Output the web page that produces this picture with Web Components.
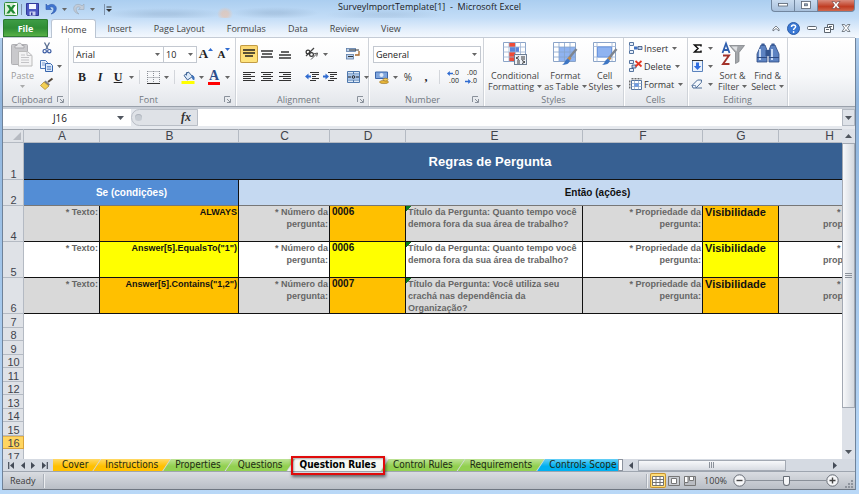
<!DOCTYPE html>
<html lang="pt">
<head>
    <meta charset="UTF-8">
    <meta name="viewport" content="width=device-width, initial-scale=1.0">
    <title>SurveyImportTemplate[1] - Microsoft Excel</title>
    <style>
        html, body {
            height: 100%;
            margin: 0;
        }
        body {
            font-family: "Open Sans", "Noto Sans", sans-serif;
            font-size: 9px;
            color: #444;
            --line: #b4bac3;
        }
    </style>
</head>
<body>
    <excel-window></excel-window>

    <script>
        // every drawing used on the ribbon and the bars: [width, height, markup]
        const ICONS = {
            excel: [14, 14, '<rect x=".5" y=".5" width="13" height="13" rx="1" fill="#fff" stroke="#2f8a3c"/><path d="M1 1h9v12H1z" fill="#d9efd7"/><path d="M2.5 3h3l1.6 2.6L9 3h2.8L8.5 7.2l3.3 4.2H9L6.9 8.9l-1.8 2.5H2.3L5.5 7.2z" fill="#1f8a34"/>'],
            save: [13, 13, '<path d="M.5.5h12v12h-11l-1-1z" fill="#4b57c0" stroke="#30389a"/><path d="M3 1h7v5H3z" fill="#f4f7ff"/><path d="M3.5 8.5h6v4h-6z" fill="#c9cff0"/><path d="M5 9.5h1.5V12H5z" fill="#30389a"/>'],
            undo: [12, 12, '<path d="M1 1v5.5h5.5L4.7 4.7C6.5 3 9 4 8.8 6.5 8.7 8.5 7.5 9.8 6 11c3.5-.8 5.5-3 5.3-5.8C11 1.5 6.5 0 2.9 2.9z" fill="#3f74d0" stroke="#2b56a8" stroke-width=".6"/>'],
            redo: [12, 12, '<path d="M11 1v5.5H5.5L7.3 4.7C5.5 3 3 4 3.2 6.5 3.3 8.5 4.5 9.8 6 11 2.5 10.2.5 8 .7 5.2 1 1.5 5.5 0 9.1 2.9z" fill="#c3ccd8" stroke="#9ba7b6" stroke-width=".6"/>'],
            custom: [8, 7, '<path d="M1.5 1h5" stroke="#333" stroke-width="1"/><path d="M1 3h6L4 6z" fill="#333"/>'],
            arrow: [5, 3, '<path d="M0 0h5L2.5 3z" fill="#666"/>'],
            bluetop: [5, 3, '<path d="M0 3h5L2.5 0z" fill="#2f6bd0"/>'],
            bluedown: [5, 3, '<path d="M0 0h5L2.5 3z" fill="#2f6bd0"/>'],
            wmin: [10, 4, '<rect x=".5" y=".5" width="9" height="2.5" fill="#fff" stroke="#555f6e" stroke-width=".8"/>'],
            wmax: [10, 8, '<rect x=".5" y=".5" width="9" height="7" fill="#fff" stroke="#555f6e" stroke-width=".8"/><rect x="3.5" y="2.8" width="3" height="2" fill="#8fa5bd" stroke="#555f6e" stroke-width=".7"/>'],
            wclose: [10, 8, '<path d="M1 .5h2.5L5 2.5 6.5.5H9L6.5 4 9 7.5H6.5L5 5.5 3.5 7.5H1L3.5 4z" fill="#fff" stroke="#6b3a3a" stroke-width=".6"/>'],
            collapse: [8, 7, '<path d="M1 4l3-3 3 3v2L4 3.5 1 6z" fill="#fff" stroke="#5d6670" stroke-width=".8"/>'],
            help: [13, 13, '<circle cx="6.5" cy="6.5" r="6" fill="#3a78d4" stroke="#2b5ca8"/><path d="M4.5 5c0-2.8 4.2-2.7 4.1-.2C8.5 6.3 6.6 6.3 6.6 8" fill="none" stroke="#fff" stroke-width="1.5"/><circle cx="6.6" cy="10" r=".9" fill="#fff"/>'],
            dmin: [10, 5, '<rect x=".5" y=".5" width="9" height="3" rx="1" fill="#fff" stroke="#5d6670"/>'],
            drest: [10, 9, '<path d="M3.5.5h6v5h-6z" fill="#fff" stroke="#5d6670"/><path d="M.5 3.5h6v5h-6z" fill="#fff" stroke="#5d6670"/><path d="M2 5.5h3M5 2.5h3" stroke="#5d6670"/>'],
            dclose: [10, 8, '<path d="M1 .5h2.5L5 2.5 6.5.5H9L6.5 4 9 7.5H6.5L5 5.5 3.5 7.5H1L3.5 4z" fill="#fff" stroke="#5d6670" stroke-width=".8"/>'],
            paste: [22, 25, '<rect x=".5" y="2.5" width="16" height="20" rx="1" fill="#c9c9cc" stroke="#b0b0b4"/><path d="M4 3.5h2C6 .5 11 .5 11 3.5h2V6H4z" fill="#e8e8ea" stroke="#a9a9ad"/><path d="M7.5 9.5h9l4.5 4V24H7.5z" fill="#f3f3f4" stroke="#bbb"/><path d="M16 9.5v4h5M10 13h4M10 15.5h8M10 18h8M10 20.5h8" fill="none" stroke="#c3c3c6"/>'],
            cut: [10, 12, '<path d="M2.5.5L6 7M7.5.5L4 7" stroke="#5a6f92" stroke-width="1.3"/><circle cx="2.7" cy="9.2" r="1.7" fill="none" stroke="#3557a0" stroke-width="1.2"/><circle cx="7.3" cy="9.2" r="1.7" fill="none" stroke="#3557a0" stroke-width="1.2"/>'],
            copy: [13, 12, '<path d="M.5.5h5l2 2v6h-7z" fill="#eaf2fd" stroke="#4a76b8"/><path d="M5.5 3.5h5l2 2v6h-7z" fill="#dbe9fb" stroke="#3765ad"/><path d="M2 3h3M2 5h3M7 6.5h4M7 8h4M7 9.5h4" stroke="#4a76b8" stroke-width=".7"/>'],
            brush: [14, 12, '<path d="M12.5.5L8 4" stroke="#55493c" stroke-width="2"/><path d="M5.5 2.5l4.5 4-1.5 1.5L4 4z" fill="#7d7f88"/><path d="M4 4L.5 7.5 5 11.5 9 8z" fill="#f2cf55" stroke="#a98426" stroke-width=".7"/>'],
            border: [13, 13, '<path d="M.5.5h12M.5 6.5h12M.5 0v12M6.5 0v12M12.5 0v12" stroke="#8b8f96" stroke-dasharray="1 1"/><path d="M0 12.5h13" stroke="#333"/>'],
            fill: [14, 13, '<path d="M3 4.5L7.5 1l4 4.5-5 3.5z" fill="#dce9f8" stroke="#3f6495"/><path d="M5.5 4.5v-3h2" fill="none" stroke="#3f6495"/><path d="M11 4.5c2 .5 2.5 2 1.8 4.5-1-.8-1.8-2-1.8-4.5z" fill="#3b6fb8" stroke="#3b6fb8"/><path d="M.5 10h13v3H.5z" fill="#ff0"/>'],
            ink: [14, 3, '<path d="M1 0h12v3H1z" fill="#f00"/>'],
            atop: [12, 10, '<path d="M0 1h12M0 4h12M2 7h8" stroke="#222" stroke-width="1.5"/>'],
            amid: [12, 10, '<path d="M0 2h12M1 5h10M0 8h12" stroke="#333" stroke-width="1.5"/>'],
            abot: [12, 10, '<path d="M2 3h8M0 6h12M0 9h12" stroke="#333" stroke-width="1.5"/>'],
            left: [12, 10, '<path d="M0 .5h12M0 2.5h8M0 4.5h12M0 6.5h8M0 8.5h12" stroke="#333"/>'],
            center: [12, 10, '<path d="M0 .5h12M2 2.5h8M0 4.5h12M2 6.5h8M0 8.5h12" stroke="#333"/>'],
            right: [12, 10, '<path d="M0 .5h12M4 2.5h8M0 4.5h12M4 6.5h8M0 8.5h12" stroke="#333"/>'],
            orient: [14, 12, '<path d="M1 8l8-8" stroke="#444" stroke-width="1.2"/><path d="M6 11.5l6-6M12.5 5L9 5.8M12.5 5l-.8 3.500" stroke="#555" fill="none"/><circle cx="3" cy="4" r="1.9" fill="none" stroke="#333" stroke-width="1.2"/><circle cx="6.5" cy="6.5" r="1.9" fill="none" stroke="#333" stroke-width="1.2"/>'],
            outdent: [14, 10, '<path d="M5 .5h9M7 2.5h7M7 4.5h4M7 6.5h7M5 8.5h6" stroke="#333"/><path d="M0 4.5l3.5-3v2H6v2H3.5v2z" fill="#2f6bd0"/>'],
            indent: [14, 10, '<path d="M5 .5h9M7 2.5h7M7 4.5h4M7 6.5h7M5 8.5h6" stroke="#333"/><path d="M6 4.5l-3.5-3v2H0v2h2.5v2z" fill="#2f6bd0"/>'],
            wrap: [14, 12, '<rect x=".5" y=".5" width="9" height="3" fill="#b9cfea" stroke="#5c7da8" stroke-width=".8"/><rect x=".5" y="6.5" width="7" height="4.5" fill="#b9cfea" stroke="#5c7da8" stroke-width=".8"/><path d="M3 2h10M2 8.5h5" stroke="#333"/><path d="M13 3v4H9" fill="none" stroke="#a5672c" stroke-width="1.3"/>'],
            merge: [13, 12, '<path d="M.5.5h12v11H.5z" fill="#dbe8f7" stroke="#4f78ad"/><path d="M.5 3h12M.5 9h12M6.5 0v3M6.5 9v3" stroke="#4f78ad"/><path d="M1 3.5h11v5H1z" fill="#a9c6ec"/><path d="M1 6h3M12 6H9" stroke="#222"/><circle cx="6.5" cy="6" r="1.3" fill="none" stroke="#222"/>'],
            money: [14, 13, '<path d="M.5 1h12v6.5H.5z" fill="#7fa5dd" stroke="#3b66ab"/><circle cx="6.5" cy="4" r="2" fill="#e3edfa"/><ellipse cx="9" cy="11" rx="4.5" ry="1.6" fill="#e8b73a" stroke="#93691a" stroke-width=".6"/><ellipse cx="10.5" cy="8.6" rx="2.5" ry="1.4" fill="#f5cf60" stroke="#93691a" stroke-width=".6"/>'],
            moveleft: [6, 5, '<path d="M0 2.5L2.8 0v1.7H6v1.6H2.8V5z" fill="#2f6bd0"/>'],
            moveright: [6, 5, '<path d="M6 2.5L3.2 0v1.7H0v1.6h3.2V5z" fill="#2f6bd0"/>'],
            conditional: [24, 24, '<path d="M.5.5h22v19H.5z" fill="#fff" stroke="#8ba4c8"/><path d="M6 1h6v4H6zM6 10h6v5H6zM6 15h6v4H6z" fill="#ee4b38"/><path d="M7 5h9v5H7z" fill="#5b86dc"/><path d="M6 .5v19M12.5 0v19M17.5 0v19M0 5h23M0 10h23M0 15h23" stroke="#9db2d3" stroke-width=".8"/><rect x="11.5" y="12.5" width="12" height="10" fill="#eef2f8" stroke="#6f7f94"/><path d="M16 14.5L13 16l3 1.5M18 15h4M18 17h4M14 19h3M14 21h3M19 18.5l3 1.5-3 1.5" fill="none" stroke="#222" stroke-width=".9"/>'],
            table: [24, 24, '<path d="M.5.5h22v19H.5z" fill="#fff" stroke="#8ba4c8"/><path d="M6 5h16v14H6z" fill="#8fb3f0"/><path d="M6 .5v19M11.5 0v19M17 0v19M0 5h23M0 10h23M0 15h23" stroke="#86a3cc" stroke-width=".8"/><path d="M23.5 7L16 16" stroke="#7e858f" stroke-width="2.5"/><path d="M16.5 14.5l2 2-2 2L14 16.500z" fill="#c08a4b"/><path d="M15 16.5l2 2.500c-2 4-5 3.500-8 4 3-1.500 2.500-5 6-6.500z" fill="#3e76c4"/>'],
            cell: [24, 24, '<path d="M.5.5h22v19H.5z" fill="#fff" stroke="#8ba4c8"/><path d="M4 .5v19M19 0v19M0 4.5h23M0 15h23" stroke="#9db2d3" stroke-width=".8"/><path d="M4.5 5h14v10h-14z" fill="#8fb3f0" stroke="#6d97e0"/><path d="M23.5 7L16 16" stroke="#7e858f" stroke-width="2.5"/><path d="M16.5 14.5l2 2-2 2L14 16.500z" fill="#c08a4b"/><path d="M15 16.5l2 2.500c-2 4-5 3.500-8 4 3-1.500 2.500-5 6-6.500z" fill="#3e76c4"/>'],
            insert: [13, 12, '<path d="M.5.5h4v3h-4zM.5 8.5h4v3h-4z" fill="#e6eefa" stroke="#55749f"/><path d="M5 4.5h3.5v3H5z" fill="#3d6fc0"/><path d="M9 4.5h4v3H9z" fill="#b8d0f0" stroke="#223a66" stroke-width=".7"/><path d="M.5 3.5v5" stroke="#9db2d3"/>'],
            delete: [13, 12, '<path d="M.5.5h4v3h-4zM.5 8.5h4v3h-4z" fill="#e6eefa" stroke="#55749f"/><path d="M3 5h4v3H3z" fill="#b8d0f0" stroke="#223a66" stroke-width=".7"/><path d="M6.5 1l6 5.5M12.5 1l-6 5.5" stroke="#e2341f" stroke-width="1.7"/>'],
            format: [13, 13, '<path d="M2.5 2.5h10v9h-10z" fill="#fff" stroke="#55749f"/><path d="M5 5h5v4H5z" fill="#6d9be8"/><path d="M5.5 2.5v9M9.5 2.5v9M2.5 5.5h10M2.5 8.5h10" stroke="#86a3cc" stroke-width=".7"/><path d="M2.5.8h10M.8 2.5v9" stroke="#333" stroke-dasharray="2 1"/>'],
            sigma: [9, 9, '<path d="M8 2.5V1H1.5L5 4.5 1.5 8H8V6.5" fill="none" stroke="#111" stroke-width="1.5"/>'],
            filldown: [11, 12, '<path d="M.5.5h10v11H.5z" fill="#e9f1fc" stroke="#5b83bd"/><path d="M0 .5h11" stroke="#333"/><path d="M4 2.5h3V6h2.2l-3.7 4-3.7-4H4z" fill="#2e6ce0"/>'],
            eraser: [12, 10, '<path d="M1 6.5L6.5 1h4l-.2 2.5L5 9H2z" fill="#f4f8fd" stroke="#4d6d98"/><path d="M5 9h6" stroke="#4d6d98"/><path d="M1 6.5h3.5L5 9" fill="none" stroke="#4d6d98" stroke-width=".7"/>'],
            sort: [24, 24, '<path d="M8.5 3.5h15L18 10.5v9l-3.5 2v-11z" fill="#a3a6aa" stroke="#777b80" stroke-width=".7"/><path d="M10.5 4.5h6l-1 5z" fill="#dfe1e4"/><path d="M1.5 11L5 1.5 8.5 11M3 8h4.5" fill="none" stroke="#2f5fae" stroke-width="1.8"/><path d="M2 13.5h6L2 22h6.5" fill="none" stroke="#a3322a" stroke-width="1.9"/>'],
            find: [24, 24, '<path d="M5 3h4l2 5v12H1v-8zM19 3h-4l-2 5v12h10v-8z" fill="#5d83c2" stroke="#2d4a82" stroke-width=".8"/><path d="M9.5 8h5v6h-5z" fill="#34558f"/><path d="M5.5 1.5h3V4h-3zM15.5 1.5h3V4h-3z" fill="#3a5c98"/><path d="M4 7v11M16 7v11" stroke="#c7d9f4" stroke-width="2"/><path d="M1 15.5h10M13 15.5h10" stroke="#2d4a82"/>'],
            launcher: [7, 7, '<path d="M.5 6V.5H6" fill="none" stroke="#8a919b"/><path d="M3 3l3 3M6.5 3v3.5H3" fill="none" stroke="#8a919b"/>'],
            navfirst: [6, 7, '<path d="M.7 0v7" stroke="#444b57" stroke-width="1.2"/><path d="M6 0v7L2 3.5z" fill="#444b57"/>'],
            navprev: [4, 7, '<path d="M4 0v7L0 3.5z" fill="#444b57"/>'],
            navnext: [4, 7, '<path d="M0 0v7l4-3.5z" fill="#444b57"/>'],
            navlast: [6, 7, '<path d="M5.3 0v7" stroke="#444b57" stroke-width="1.2"/><path d="M0 0v7l4-3.5z" fill="#444b57"/>'],
            up: [7, 4, '<path d="M0 4h7L3.5 0z" fill="#50565f"/>'],
            down: [7, 4, '<path d="M0 0h7L3.5 4z" fill="#50565f"/>'],
            vnormal: [12, 10, '<path d="M.5.5h11v9H.5zM4 .5v9M8 .5v9M.5 3.5h11M.5 6.5h11" fill="#fff" stroke="#666" stroke-width=".9"/>'],
            vpage: [12, 10, '<path d="M.5.5h11v9H.5z" fill="#c9ccd1" stroke="#777"/><path d="M3.5 2.5h5v5h-5z" fill="#fff" stroke="#777"/>'],
            vbreak: [12, 10, '<path d="M.5.5h11v9H.5z" fill="#b9bcc2" stroke="#777"/><path d="M.5.5H4v6H.5zM5.5.5h4v4h-4z" fill="#fff" stroke="#777"/>'],
            minus: [13, 13, '<circle cx="6.5" cy="6.5" r="5.7" fill="#f5f6f8" stroke="#666c75"/><path d="M3.5 6.5h6" stroke="#444" stroke-width="1.4"/>'],
            plus: [13, 13, '<circle cx="6.5" cy="6.5" r="5.7" fill="#f5f6f8" stroke="#666c75"/><path d="M3.5 6.5h6M6.5 3.5v6" stroke="#444" stroke-width="1.4"/>'],
            grip: [9, 9, '<path d="M7 1h2M4 4h2M7 4h2M1 7h2M4 7h2M7 7h2" stroke="#8e949d" stroke-width="2"/>'],
            corner: [8, 8, '<path d="M8 0v8H0z" fill="#b6bac1"/>']
        };

        // base class: fills an open shadow root from template()
        class ExcelElement extends HTMLElement {
            constructor() {
                super();
                this.attachShadow({ mode: 'open' });
            }

            connectedCallback() {
                this.shadowRoot.innerHTML = this.template();
            }

            attr(name, fallback = '') {
                return this.getAttribute(name) || fallback;
            }
        }

        class ExcelIcon extends ExcelElement {
            template() {
                const [w, h, body] = ICONS[this.attr('name')];
                return `
                    <style>
                        :host { display: inline-flex; flex: none; }
                        svg { display: block; overflow: visible; }
                    </style>
                    <svg width="${w}" height="${h}" viewBox="0 0 ${w} ${h}" aria-hidden="true">${body}</svg>
                `;
            }
        }
        customElements.define('excel-icon', ExcelIcon);

        // small ribbon button: icon or glyph, optional caption, optional drop-down arrow
        class ToolButton extends ExcelElement {
            template() {
                const icon = this.attr('icon');
                return `
                    <style>
                        :host { display: inline-flex; flex: none; }
                        button {
                            display: inline-flex; align-items: center;
                            height: 18px; padding: 0; border: 0; background: none;
                            font: inherit; color: #333;
                        }
                        :host([active]) button {
                            border-radius: 2px;
                            background: linear-gradient(#fbd670, #ffe57d);
                            box-shadow: inset 0 0 0 1px #c29b45;
                        }
                        .face { display: flex; align-items: center; justify-content: center; width: 18px; }
                        .arrow { width: 8px; display: flex; justify-content: center; }
                        .text:empty { display: none; }
                        .text { padding-right: 2px; white-space: nowrap; }
                    </style>
                    <button type="button" aria-label="${this.attr('label')}">
                        <span class="face">${icon ? `<excel-icon name="${icon}"></excel-icon>` : '<slot></slot>'}</span>
                        <span class="text">${this.attr('text')}</span>
                        ${this.hasAttribute('menu') ? '<span class="arrow"><excel-icon name="arrow"></excel-icon></span>' : ''}
                    </button>
                `;
            }
        }
        customElements.define('tool-button', ToolButton);

        // large ribbon button with a two line caption
        class BigButton extends ExcelElement {
            template() {
                return `
                    <style>
                        :host { display: inline-flex; flex: none; }
                        button {
                            display: flex; flex-direction: column; align-items: center;
                            padding: 4px 0 0; border: 0; background: none;
                            font: inherit; line-height: 11px; color: #444;
                        }
                        excel-icon { height: 28px; }
                        .second { display: flex; align-items: center; gap: 3px; min-height: 11px; white-space: nowrap; }
                        .second excel-icon { height: 3px; }
                        :host([disabled]) button { color: #9a9a9a; }
                        :host([disabled]) .second { opacity: .5; }
                    </style>
                    <button type="button" ${this.hasAttribute('disabled') ? 'disabled' : ''}>
                        <excel-icon name="${this.attr('icon')}"></excel-icon>
                        <span>${this.attr('first')}</span>
                        <span class="second">${this.attr('second')}<excel-icon name="arrow"></excel-icon></span>
                    </button>
                `;
            }
        }
        customElements.define('big-button', BigButton);

        class PickList extends ExcelElement {
            template() {
                return `
                    <style>
                        :host { display: flex; position: relative; }
                        select {
                            appearance: none; width: 100%; height: 17px; padding: 0 2px;
                            border: 1px solid #c3c8d0; border-radius: 0; background: #fff;
                            font: inherit; color: #222;
                        }
                        excel-icon { position: absolute; right: 4px; top: 7px; pointer-events: none; }
                    </style>
                    <select aria-label="${this.attr('label')}"><option>${this.attr('value')}</option></select>
                    <excel-icon name="arrow"></excel-icon>
                `;
            }
        }
        customElements.define('pick-list', PickList);

        class RibbonGroup extends ExcelElement {
            template() {
                return `
                    <style>
                        :host {
                            display: flex; flex-direction: column; flex: none; box-sizing: border-box;
                            border-right: 1px solid #cfd3d9; box-shadow: 1px 0 #fff;
                        }
                        .body { display: flex; flex: 1; }
                        footer {
                            display: flex; align-items: center; height: 14px; padding: 0 4px;
                            color: #717780;
                        }
                        footer span { flex: 1; text-align: center; }
                    </style>
                    <div class="body"><slot></slot></div>
                    <footer><span>${this.attr('label')}</span>${this.hasAttribute('launcher') ? '<excel-icon name="launcher"></excel-icon>' : ''}</footer>
                `;
            }
        }
        customElements.define('ribbon-group', RibbonGroup);

        class TitleBar extends ExcelElement {
            template() {
                return `
                    <style>
                        /* the smudges are the window behind showing through the glass */
                        :host {
                            display: grid; grid-template-columns: 1fr auto 1fr; height: 18px;
                            background:
                                radial-gradient(8px 7px at 225px 14px, #f0bfa090 40%, transparent),
                                radial-gradient(60px 6px at 165px 14px, #7f9dbd50 20%, transparent),
                                radial-gradient(44px 6px at 275px 13px, #7f9dbd50 20%, transparent),
                                radial-gradient(60px 6px at 385px 15px, #7f9dbd38 20%, transparent),
                                linear-gradient(#abcef0, #c3ddf7);
                        }
                        .quick { display: flex; align-items: center; padding-left: 4px; }
                        .quick button { display: flex; padding: 0; border: 0; background: none; }
                        .quick .save { margin: 0 6px 0 4px; }
                        .quick .menu { margin: 0 6px 0 5px; }
                        i { width: 1px; height: 11px; background: #7e92ab; margin: 0 0 0 3px; }
                        h1 { margin: 0; font: inherit; line-height: 14px; color: #1b1b1b; white-space: pre; }
                        .controls { display: flex; justify-content: flex-end; align-items: start; padding-right: 4px; }
                        .controls button {
                            display: flex; align-items: center; justify-content: center;
                            width: 23px; height: 12px; padding: 0 0 2px;
                            border: 1px solid #71869f; border-top: 0; border-right: 0;
                            background: linear-gradient(#c9dbef, #a8c0dc);
                        }
                        .controls .min { border-radius: 0 0 0 4px; }
                        .controls .close {
                            width: 38px; border-right: 1px solid #71869f; border-radius: 0 0 4px 0;
                            background: linear-gradient(#d98b7c, #c03c22 60%, #d0674c);
                        }
                    </style>
                    <div class="quick">
                        <excel-icon name="excel"></excel-icon>
                        <i></i>
                        <button class="save" aria-label="Save"><excel-icon name="save"></excel-icon></button>
                        <button aria-label="Undo"><excel-icon name="undo"></excel-icon></button>
                        <button class="menu" aria-label="Undo list"><excel-icon name="arrow"></excel-icon></button>
                        <button aria-label="Redo"><excel-icon name="redo"></excel-icon></button>
                        <button class="menu" aria-label="Redo list"><excel-icon name="arrow"></excel-icon></button>
                        <i></i>
                        <button aria-label="Customize toolbar"><excel-icon name="custom"></excel-icon></button>
                    </div>
                    <h1>SurveyImportTemplate[1]  -  Microsoft Excel</h1>
                    <div class="controls">
                        <button class="min" aria-label="Minimize"><excel-icon name="wmin"></excel-icon></button>
                        <button aria-label="Maximize"><excel-icon name="wmax"></excel-icon></button>
                        <button class="close" aria-label="Close"><excel-icon name="wclose"></excel-icon></button>
                    </div>
                `;
            }
        }
        customElements.define('title-bar', TitleBar);

        class RibbonTabs extends ExcelElement {
            template() {
                const tabs = ['Home', 'Insert', 'Page Layout', 'Formulas', 'Data', 'Review', 'View'];
                return `
                    <style>
                        :host {
                            display: flex; height: 20px; padding: 0 4px 0 3px;
                            background: linear-gradient(#c3ddf7, #e4effb 60%, #f5f9fe);
                        }
                        nav { display: flex; flex: 1; box-shadow: inset 0 -1px #c5ccd6; }
                        button { padding: 0 11px; border: 0; background: none; font: inherit; color: #444; }
                        .file {
                            width: 45px; margin: 1px 3px 1px 0; padding: 0;
                            border-radius: 2px 2px 0 0; font-weight: bold; color: #fff;
                            background: linear-gradient(#3f9e47, #2f8d36 50%, #5cb548);
                            box-shadow: inset 0 0 0 1px #2c7a31;
                        }
                        .home {
                            margin-top: 1px; border: 1px solid #bac5d3; border-bottom: 0;
                            border-radius: 3px 3px 0 0; padding: 0 9px; background: #fff;
                        }
                        .tools { display: flex; align-items: center; gap: 7px; padding-right: 4px; box-shadow: inset 0 -1px #c5ccd6; }
                    </style>
                    <nav>
                        <button class="file">File</button>
                        ${tabs.map((t, i) => `<button class="${i ? '' : 'home'}">${t}</button>`).join('')}
                    </nav>
                    <div class="tools">
                        <excel-icon name="collapse"></excel-icon>
                        <excel-icon name="help"></excel-icon>
                        <excel-icon name="dmin"></excel-icon>
                        <excel-icon name="drest"></excel-icon>
                        <excel-icon name="dclose"></excel-icon>
                    </div>
                `;
            }
        }
        customElements.define('ribbon-tabs', RibbonTabs);

        class ExcelRibbon extends ExcelElement {
            template() {
                return `
                    <style>
                        :host {
                            display: flex; height: 68px;
                            background: linear-gradient(#fff, #f7f8fa 55%, #e3e6eb);
                            border-bottom: 1px solid #9aa1ab;
                        }
                        .rows, .row { display: flex; }
                        .rows { flex-direction: column; gap: 5px; padding: 7px 0 0 4px; }
                        .tight { flex-direction: column; padding-top: 1px; }
                        .cells .tight { padding-left: 2px; }
                        .row { align-items: center; height: 18px; }
                        hr { width: 1px; height: 14px; margin: 0 4px; border: 0; background: #d3d6db; }
                        .tall { height: 42px; margin: 7px 2px 0 3px; }
                        .gap { width: 9px; }
                        .flush { padding-left: 0; }
                        .serif { font: bold 12px "Liberation Serif", serif; color: #222; }
                        .italic { font-style: italic; }
                        .letter { display: flex; font: bold 13px/14px "Liberation Serif", serif; color: #222; }
                        .less { font-size: 11px; }
                        .letter excel-icon { padding-top: 1px; }
                        .small { font-size: 10px; }
                        .stack { display: flex; flex-direction: column; align-items: center; font: bold 14px/12px "Liberation Serif", serif; color: #2c4d8c; }
                        .digits { display: grid; font-size: 7px; line-height: 8px; color: #222; }
                        .digits span { display: flex; align-items: center; justify-content: flex-end; }
                        .clipboard { width: 66px; }
                        .font { width: 167px; }
                        .alignment { width: 133px; }
                        .number { width: 115px; }
                        .styles { width: 140px; }
                        .cells { width: 64px; }
                        .editing { width: 100px; }
                        .clipboard big-button { margin: 0 4px 0 8px; }
                        .styles big-button { margin-left: 2px; }
                        .styles big-button:first-child { margin-left: 4px; }
                        .editing big-button { margin-left: 4px; }
                        .name { width: 91px; }
                        .size { width: 34px; margin-left: -1px; }
                        .kind { width: 108px; }
                    </style>
                    <ribbon-group class="clipboard" label="Clipboard" launcher>
                        <big-button icon="paste" first="Paste" second="" disabled></big-button>
                        <div class="tight">
                            <div class="row"><tool-button icon="cut" label="Cut"></tool-button></div>
                            <div class="row"><tool-button icon="copy" label="Copy" menu></tool-button></div>
                            <div class="row"><tool-button icon="brush" label="Format painter"></tool-button></div>
                        </div>
                    </ribbon-group>
                    <ribbon-group class="font" label="Font" launcher>
                        <div class="rows">
                            <div class="row">
                                <pick-list class="name" label="Font name" value="Arial"></pick-list>
                                <pick-list class="size" label="Font size" value="10"></pick-list>
                                <tool-button label="Grow font"><span class="letter">A<excel-icon name="bluetop"></excel-icon></span></tool-button>
                                <tool-button label="Shrink font"><span class="letter less">A<excel-icon name="bluedown"></excel-icon></span></tool-button>
                            </div>
                            <div class="row">
                                <tool-button label="Bold"><b class="serif">B</b></tool-button>
                                <tool-button label="Italic"><i class="serif italic">I</i></tool-button>
                                <tool-button label="Underline" menu><u class="serif">U</u></tool-button>
                                <hr>
                                <tool-button icon="border" label="Borders" menu></tool-button>
                                <hr>
                                <tool-button icon="fill" label="Fill color" menu></tool-button>
                                <tool-button label="Font color" menu><span class="stack">A<excel-icon name="ink"></excel-icon></span></tool-button>
                            </div>
                        </div>
                    </ribbon-group>
                    <ribbon-group class="alignment" label="Alignment" launcher>
                        <div class="rows">
                            <div class="row">
                                <tool-button icon="atop" label="Top align" active></tool-button>
                                <tool-button icon="amid" label="Middle align"></tool-button>
                                <tool-button icon="abot" label="Bottom align"></tool-button>
                                <span class="gap"></span>
                                <tool-button icon="orient" label="Orientation" menu></tool-button>
                            </div>
                            <div class="row">
                                <tool-button icon="left" label="Align left"></tool-button>
                                <tool-button icon="center" label="Center"></tool-button>
                                <tool-button icon="right" label="Align right"></tool-button>
                                <span class="gap"></span>
                                <tool-button icon="outdent" label="Decrease indent"></tool-button>
                                <tool-button icon="indent" label="Increase indent"></tool-button>
                            </div>
                        </div>
                        <hr class="tall">
                        <div class="rows flush">
                            <div class="row"><tool-button icon="wrap" label="Wrap text"></tool-button></div>
                            <div class="row"><tool-button icon="merge" label="Merge and center" menu></tool-button></div>
                        </div>
                    </ribbon-group>
                    <ribbon-group class="number" label="Number" launcher>
                        <div class="rows">
                            <div class="row"><pick-list class="kind" label="Number format" value="General"></pick-list></div>
                            <div class="row">
                                <tool-button icon="money" label="Accounting format" menu></tool-button>
                                <tool-button label="Percent style"><span class="small">%</span></tool-button>
                                <tool-button label="Comma style"><span class="serif">,</span></tool-button>
                                <hr>
                                <tool-button label="Increase decimal"><span class="digits"><span><excel-icon name="moveleft"></excel-icon>.0</span><span>.00</span></span></tool-button>
                                <tool-button label="Decrease decimal"><span class="digits"><span>.00</span><span><excel-icon name="moveright"></excel-icon>.0</span></span></tool-button>
                            </div>
                        </div>
                    </ribbon-group>
                    <ribbon-group class="styles" label="Styles">
                        <big-button icon="conditional" first="Conditional" second="Formatting"></big-button>
                        <big-button icon="table" first="Format" second="as Table"></big-button>
                        <big-button icon="cell" first="Cell" second="Styles"></big-button>
                    </ribbon-group>
                    <ribbon-group class="cells" label="Cells">
                        <div class="tight">
                            <div class="row"><tool-button icon="insert" text="Insert" label="Insert cells" menu></tool-button></div>
                            <div class="row"><tool-button icon="delete" text="Delete" label="Delete cells" menu></tool-button></div>
                            <div class="row"><tool-button icon="format" text="Format" label="Format cells" menu></tool-button></div>
                        </div>
                    </ribbon-group>
                    <ribbon-group class="editing" label="Editing">
                        <div class="tight">
                            <div class="row"><tool-button icon="sigma" label="Sum" menu></tool-button></div>
                            <div class="row"><tool-button icon="filldown" label="Fill" menu></tool-button></div>
                            <div class="row"><tool-button icon="eraser" label="Clear" menu></tool-button></div>
                        </div>
                        <big-button icon="sort" first="Sort &amp;amp;" second="Filter"></big-button>
                        <big-button icon="find" first="Find &amp;amp;" second="Select"></big-button>
                    </ribbon-group>
                `;
            }
        }
        customElements.define('excel-ribbon', ExcelRibbon);

        class FormulaBar extends ExcelElement {
            template() {
                return `
                    <style>
                        :host {
                            display: flex; height: 17px; padding: 2px 0 3px;
                            background: linear-gradient(#c9ced6 2px, #e6e9ee 2px);
                            font-size: 10px;
                        }
                        input { min-width: 0; border: 0; padding: 0; background: #fff; font: inherit; color: #222; }
                        .name { width: 114px; text-align: center; }
                        .arrow { display: flex; align-items: center; width: 14px; background: #fff; }
                        .fx {
                            display: flex; align-items: center; justify-content: space-between;
                            box-sizing: border-box; width: 67px; padding: 0 6px 0 3px;
                            border: 1px solid #b9bec6; border-radius: 9px 0 0 9px; background: #dfe2e7;
                            font: italic bold 12px "Liberation Serif", serif; color: #333;
                        }
                        .dot { width: 7px; height: 7px; border-radius: 4px; background: #c6cbd2; box-shadow: inset 0 1px #aeb4bd; }
                        .formula { flex: 1; }
                        button {
                            display: flex; align-items: center; justify-content: center;
                            width: 13px; padding: 0; border: 1px solid #b4bac3; background: #dfe3e9;
                        }
                    </style>
                    <input class="name" aria-label="Name box" value="J16">
                    <span class="arrow"><excel-icon name="down"></excel-icon></span>
                    <span class="fx"><span class="dot"></span><span>fx</span></span>
                    <input class="formula" aria-label="Formula">
                    <button aria-label="Expand formula bar"><excel-icon name="down"></excel-icon></button>
                `;
            }
        }
        customElements.define('formula-bar', FormulaBar);

        class SheetGrid extends ExcelElement {
            template() {
                const rules = [
                    { row: 4, text: 'ALWAYS', number: '0006', tone: 'orange', title: 'Título da Pergunta: Quanto tempo você demora fora da sua área de trabalho?' },
                    { row: 5, text: 'Answer[5].EqualsTo("1")', number: '0006', tone: 'yellow', title: 'Título da Pergunta: Quanto tempo você demora fora da sua área de trabalho?' },
                    { row: 6, text: 'Answer[5].Contains("1,2")', number: '0007', tone: 'orange', title: 'Título da Pergunta: Você utiliza seu crachá nas dependência da Organização?' }
                ];
                const empty = [7, 8, 9, 10, 11, 12, 13, 14, 15, 16, 17];
                return `
                    <style>
                        :host { display: flex; flex: 1; min-height: 0; background: #fff; }
                        .view { flex: 1; min-width: 0; overflow: hidden; }
                        table {
                            table-layout: fixed; width: 953px; border-spacing: 0;
                            font-family: "Liberation Sans", Arial, sans-serif; font-size: 9px; line-height: 12px;
                        }
                        th, td { padding: 0; }
                        thead th {
                            height: 14px; font-size: 12px; font-weight: normal; color: #3f444c;
                            background: #dfe2e7; box-shadow: inset -1px -1px var(--line), inset 0 1px #9ea4ad;
                        }
                        thead excel-icon { display: flex; justify-content: flex-end; padding: 0 3px 0 0; }
                        tbody th {
                            vertical-align: bottom; font-size: 11px; font-weight: normal; color: #3f444c;
                            background: #dfe2e7; box-shadow: inset -1px -1px var(--line);
                        }
                        td { vertical-align: top; font-weight: bold; color: #666; box-shadow: inset -1px -1px #111; }
                        .title { height: 37px; }
                        .title td { vertical-align: middle; text-align: center; font-size: 13px; color: #fff; background: #376092; }
                        .heads { height: 26px; }
                        .heads td { vertical-align: middle; text-align: center; font-size: 10px; color: #111; background: #c5d9f1; box-shadow: inset -1px 0 #111, inset 0 -1px #777; }
                        .heads .if { color: #fff; background: #538dd5; }
                        .rule { height: 36px; }
                        .rule td { padding: 0 2px; }
                        .rule.orange td { background-color: #d9d9d9; }
                        .right { text-align: right; }
                        .rule.orange .value { background-color: #ffc000; }
                        .rule.yellow .value { background-color: #ff0; }
                        .rule .value { color: #111; }
                        .number { font-size: 10px; }
                        .property { font-size: 11px; }
                        .flag { background-image: linear-gradient(135deg, #0a7d1e 4px, transparent 4px); }
                        .blank { height: 13px; }
                        .blank:nth-child(even) { height: 14px; }
                        .blank td { box-shadow: none; }
                        .current th { background: #ffd560; box-shadow: inset -1px -1px #d9a33a, inset 0 1px #e3b24c; }
                        aside {
                            display: flex; flex-direction: column; align-items: center; width: 13px;
                            background: #dde1e8;
                        }
                        aside button {
                            display: flex; align-items: center; justify-content: center;
                            width: 13px; height: 14px; padding: 0; border: 0; background: none;
                        }
                        .thumb {
                            display: flex; align-items: center; justify-content: center; box-sizing: border-box;
                            width: 13px; flex: 267; border: 1px solid #a3a9b3;
                            background: linear-gradient(90deg, #f7f8fa, #d3d8df);
                        }
                        .thumb::before { content: ""; width: 7px; height: 6px; background: repeating-linear-gradient(#8c929b 0 1px, transparent 1px 2px); }
                        .rest { flex: 37; }
                    </style>
                    <div class="view">
                        <table>
                            <colgroup>
                                <col style="width: 21px"><col style="width: 76px"><col style="width: 139px">
                                <col style="width: 91px"><col style="width: 76px"><col style="width: 177px">
                                <col style="width: 120px"><col style="width: 76px"><col style="width: 101px"><col style="width: 76px">
                            </colgroup>
                            <thead>
                                <tr><th><excel-icon name="corner"></excel-icon></th>${[...'ABCDEFGH'].map(c => `<th>${c}</th>`).join('')}<th></th></tr>
                            </thead>
                            <tbody>
                                <tr class="title"><th>1</th><td colspan="9">Regras de Pergunta</td></tr>
                                <tr class="heads"><th>2</th><td class="if" colspan="2">Se (condições)</td><td colspan="7">Então (ações)</td></tr>
                                ${rules.map(r => `
                                    <tr class="rule ${r.tone}">
                                        <th>${r.row}</th>
                                        <td class="right">* Texto:</td>
                                        <td class="right value">${r.text}</td>
                                        <td class="right">* Número da<br>pergunta:</td>
                                        <td class="value number">${r.number}</td>
                                        <td class="flag">${r.title}</td>
                                        <td class="right">* Propriedade da<br>pergunta:</td>
                                        <td class="value property">Visibilidade</td>
                                        <td class="right">* Valor da<br>propriedade:</td>
                                        <td></td>
                                    </tr>`).join('')}
                                ${empty.map(n => `<tr class="blank${n === 16 ? ' current' : ''}"><th>${n}</th><td colspan="9"></td></tr>`).join('')}
                            </tbody>
                        </table>
                    </div>
                    <aside>
                        <button aria-label="Scroll up"><excel-icon name="up"></excel-icon></button>
                        <span class="thumb"></span>
                        <span class="rest"></span>
                        <button aria-label="Scroll down"><excel-icon name="down"></excel-icon></button>
                    </aside>
                `;
            }
        }
        customElements.define('sheet-grid', SheetGrid);

        class SheetTab extends ExcelElement {
            template() {
                return `
                    <style>
                        :host { display: block; position: relative; flex: none; margin-left: -7px; }
                        button {
                            display: block; height: 12px; padding: 0 12px; border: 0;
                            font: inherit; line-height: 12px; color: #1c2a12; white-space: nowrap;
                            background: linear-gradient(#ffffff66, transparent 60%) var(--tab, #92d050);
                            clip-path: polygon(0 100%, 8px 0, 100% 0, calc(100% - 8px) 100%);
                        }
                        :host(:first-child) { margin-left: 0; }
                        :host(:first-child) button { padding-left: 9px; clip-path: polygon(0 100%, 0 0, 100% 0, calc(100% - 8px) 100%); }
                        :host([selected]) button { font-weight: bold; color: #000; }
                        /* red frame drawn over the highlighted tab */
                        :host([selected])::after {
                            content: ""; position: absolute; left: 3px; right: 3px; top: -3px; bottom: -4px;
                            border: 2px solid #e00b0b; box-shadow: 1px 2px 3px #0008, inset 1px 1px 2px #0005;
                        }
                        :host([selected]) { z-index: 1; }
                    </style>
                    <button type="button"><slot></slot></button>
                `;
            }
        }
        customElements.define('sheet-tab', SheetTab);

        class SheetBar extends ExcelElement {
            template() {
                return `
                    <style>
                        :host {
                            display: flex; align-items: center; position: relative; z-index: 1;
                            height: 13px; background: #d5dae2; border-bottom: 1px solid #9ea5af; box-sizing: border-box;
                        }
                        .nav { display: flex; align-items: center; justify-content: space-between; width: 40px; padding: 0 5px; }
                        .nav button, .scroll button { display: flex; padding: 0; border: 0; background: none; }
                        .tabs {
                            display: flex; flex: 1; min-width: 0; overflow-x: clip; overflow-y: visible;
                            font: 10px "DejaVu Sans Condensed", "Noto Sans", sans-serif;
                        }
                        .orange { --tab: #ffc000; }
                        .blue { --tab: #00b0f0; }
                        .white { --tab: #f4f7f0; }
                        .split { width: 3px; height: 10px; border: 1px solid #8c939e; background: #fff; }
                        .scroll { display: flex; align-items: center; width: 219px; height: 12px; }
                        .scroll button { width: 15px; justify-content: center; }
                        .thumb {
                            display: flex; align-items: center; justify-content: center; box-sizing: border-box;
                            flex: 148; height: 11px; border: 1px solid #a3a9b3; background: linear-gradient(#f7f8fa, #d8dce3);
                        }
                        .thumb::before { content: ""; width: 6px; height: 6px; background: repeating-linear-gradient(90deg, #8c929b 0 1px, transparent 1px 2px); }
                        .rest { flex: 41; }
                        .end { width: 13px; }
                    </style>
                    <div class="nav">
                        <button aria-label="First sheet"><excel-icon name="navfirst"></excel-icon></button>
                        <button aria-label="Previous sheet"><excel-icon name="navprev"></excel-icon></button>
                        <button aria-label="Next sheet"><excel-icon name="navnext"></excel-icon></button>
                        <button aria-label="Last sheet"><excel-icon name="navlast"></excel-icon></button>
                    </div>
                    <div class="tabs">
                        <sheet-tab class="orange">Cover</sheet-tab>
                        <sheet-tab class="orange">Instructions</sheet-tab>
                        <sheet-tab>Properties</sheet-tab>
                        <sheet-tab>Questions</sheet-tab>
                        <sheet-tab class="white" selected>Question Rules</sheet-tab>
                        <sheet-tab>Control Rules</sheet-tab>
                        <sheet-tab>Requirements</sheet-tab>
                        <sheet-tab class="blue">Controls Scope</sheet-tab>
                    </div>
                    <span class="split"></span>
                    <div class="scroll">
                        <button aria-label="Scroll left"><excel-icon name="navprev"></excel-icon></button>
                        <span class="thumb"></span>
                        <span class="rest"></span>
                        <button aria-label="Scroll right"><excel-icon name="navnext"></excel-icon></button>
                    </div>
                    <span class="end"></span>
                `;
            }
        }
        customElements.define('sheet-bar', SheetBar);

        class StatusBar extends ExcelElement {
            template() {
                return `
                    <style>
                        :host {
                            display: flex; align-items: center; height: 18px; padding: 0 2px 0 7px;
                            background: linear-gradient(#d9dce1, #b9bec6); border-bottom: 1px solid #6f7782; box-sizing: border-box;
                            color: #3c3c3c;
                        }
                        i { width: 1px; height: 14px; margin: 0 3px 0 7px; background: #aab0b9; box-shadow: 1px 0 #eceef1; }
                        .space { flex: 1; }
                        button { display: flex; align-items: center; justify-content: center; width: 16px; height: 15px; padding: 0; border: 0; background: none; }
                        .on { border-radius: 2px; background: #ffdf7a; box-shadow: inset 0 0 0 1px #c8942f; }
                        output { padding: 0 6px; }
                        .zoom { width: 13px; }
                        input { appearance: none; width: 80px; height: 13px; margin: 0; background: linear-gradient(#8a9099, #8a9099) center / 100% 1px no-repeat; }
                        input::-webkit-slider-thumb {
                            appearance: none; width: 7px; height: 10px; border: 1px solid #666c75;
                            border-radius: 1px 1px 4px 4px; background: #f5f6f8; box-sizing: border-box;
                        }
                        .grip { align-self: flex-end; margin-left: 5px; }
                    </style>
                    <span>Ready</span><i></i>
                    <span class="space"></span>
                    <i></i>
                    <button class="on" aria-label="Normal view"><excel-icon name="vnormal"></excel-icon></button>
                    <button aria-label="Page layout view"><excel-icon name="vpage"></excel-icon></button>
                    <button aria-label="Page break preview"><excel-icon name="vbreak"></excel-icon></button>
                    <output>100%</output>
                    <button class="zoom" aria-label="Zoom out"><excel-icon name="minus"></excel-icon></button>
                    <input type="range" aria-label="Zoom" min="0" max="100" value="50">
                    <button class="zoom" aria-label="Zoom in"><excel-icon name="plus"></excel-icon></button>
                    <excel-icon class="grip" name="grip"></excel-icon>
                `;
            }
        }
        customElements.define('status-bar', StatusBar);

        class ExcelWindow extends ExcelElement {
            template() {
                return `
                    <style>
                        :host {
                            display: flex; flex-direction: column; height: 100%; overflow: hidden;
                            background: linear-gradient(#c3ddf7, #8fb4dc 20%, #a5c8ec 60%, #b9d8f7);
                        }
                        main {
                            display: flex; flex-direction: column; flex: 1; min-height: 0;
                            margin: 0 4px 4px 3px; box-shadow: -1px 0 #6f8299, 1px 0 #6f8299;
                        }
                    </style>
                    <title-bar></title-bar>
                    <ribbon-tabs></ribbon-tabs>
                    <main>
                        <excel-ribbon></excel-ribbon>
                        <formula-bar></formula-bar>
                        <sheet-grid></sheet-grid>
                        <sheet-bar></sheet-bar>
                        <status-bar></status-bar>
                    </main>
                `;
            }
        }
        customElements.define('excel-window', ExcelWindow);
    </script>
</body>
</html>
